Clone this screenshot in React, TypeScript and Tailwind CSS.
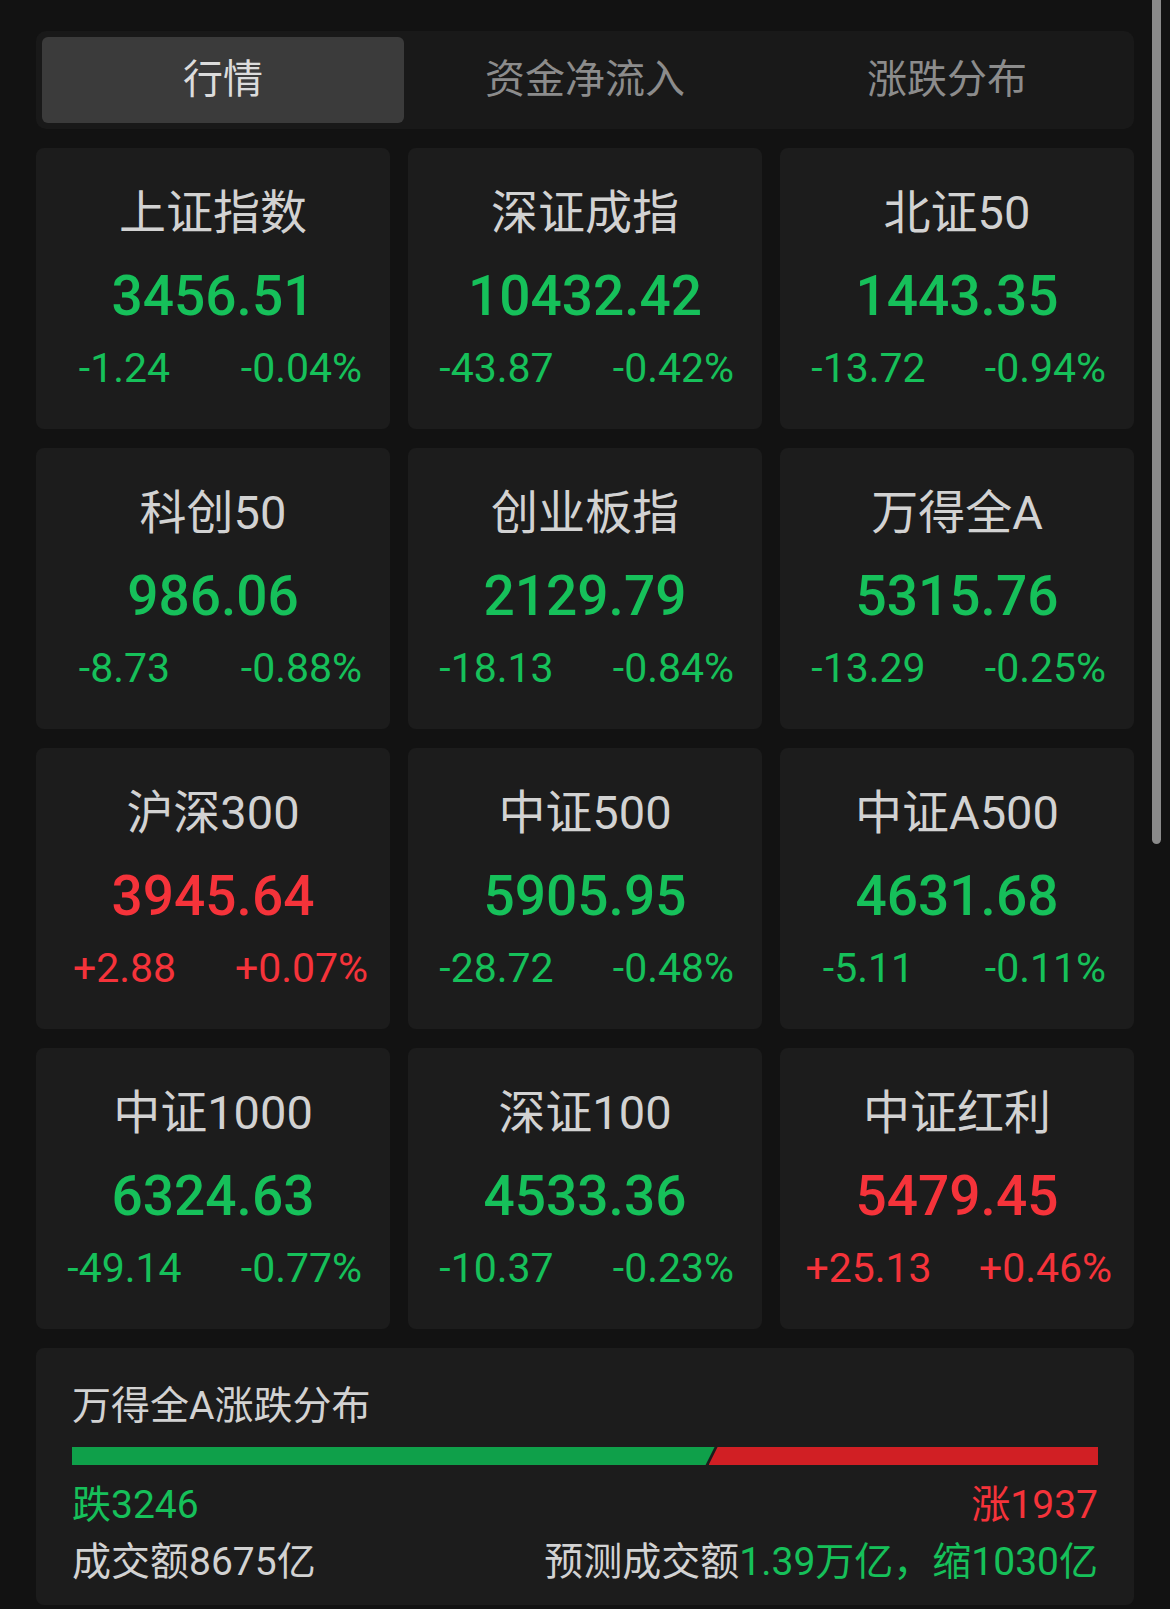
import { useState } from "react";

type Quote = {
  name: string;
  price: string;
  change: string;
  percent: string;
};

const QUOTES: Quote[] = [
  { name: "上证指数", price: "3456.51", change: "-1.24", percent: "-0.04%" },
  { name: "深证成指", price: "10432.42", change: "-43.87", percent: "-0.42%" },
  { name: "北证50", price: "1443.35", change: "-13.72", percent: "-0.94%" },
  { name: "科创50", price: "986.06", change: "-8.73", percent: "-0.88%" },
  { name: "创业板指", price: "2129.79", change: "-18.13", percent: "-0.84%" },
  { name: "万得全A", price: "5315.76", change: "-13.29", percent: "-0.25%" },
  { name: "沪深300", price: "3945.64", change: "+2.88", percent: "+0.07%" },
  { name: "中证500", price: "5905.95", change: "-28.72", percent: "-0.48%" },
  { name: "中证A500", price: "4631.68", change: "-5.11", percent: "-0.11%" },
  { name: "中证1000", price: "6324.63", change: "-49.14", percent: "-0.77%" },
  { name: "深证100", price: "4533.36", change: "-10.37", percent: "-0.23%" },
  { name: "中证红利", price: "5479.45", change: "+25.13", percent: "+0.46%" },
];

const TABS = ["行情", "资金净流入", "涨跌分布"];

const DOWN = 3246;
const UP = 1937;

function QuoteCard({ quote }: { quote: Quote }) {
  const up = quote.change.startsWith("+");
  const color = up ? "text-[#f5333a]" : "text-[#16c05a]";

  return (
    <div className="h-[281px] rounded-[8px] bg-[#1c1c1c] flex flex-col items-center pt-[37px]">
      <div className="text-[47px] leading-[56px] text-[#d2d2d2]">{quote.name}</div>
      <div className={`mt-[23px] text-[55px] leading-[64px] font-medium ${color}`}>
        {quote.price}
      </div>
      <div className={`mt-[16px] w-full grid grid-cols-2 text-center text-[41px] leading-[48px] ${color}`}>
        <span>{quote.change}</span>
        <span>{quote.percent}</span>
      </div>
    </div>
  );
}

export default function App() {
  const [activeTab, setActiveTab] = useState(0);
  const downPct = (DOWN / (DOWN + UP)) * 100;

  return (
    <div className="relative w-full min-h-[1609px] bg-[#121212] px-[36px] pt-[31px] font-['Roboto','Noto_Sans_CJK_SC',sans-serif]">
      {/* tabs */}
      <div className="h-[98px] rounded-[10px] bg-[#191919] p-[6px] grid grid-cols-3">
        {TABS.map((tab, i) => (
          <button
            key={tab}
            onClick={() => setActiveTab(i)}
            className={`rounded-[6px] text-[40px] leading-none ${
              activeTab === i ? "bg-[#3b3b3b] text-[#dcdcdc]" : "text-[#8c8c8c]"
            }`}
          >
            {tab}
          </button>
        ))}
      </div>

      {/* index cards */}
      <div className="mt-[19px] grid grid-cols-3 gap-x-[18px] gap-y-[19px]">
        {QUOTES.map((q) => (
          <QuoteCard key={q.name} quote={q} />
        ))}
      </div>

      {/* distribution */}
      <div className="mt-[19px] h-[257px] rounded-[8px] bg-[#1c1c1c] px-[36px] pt-[34px]">
        <div className="text-[39px] leading-[48px] text-[#d2d2d2]">万得全A涨跌分布</div>
        <div className="mt-[17px] h-[18px] flex">
          <div
            className="h-full bg-[#0fa04a] [clip-path:polygon(0_0,100%_0,calc(100%_-_9px)_100%,0_100%)]"
            style={{ width: `${downPct}%` }}
          />
          <div className="h-full flex-1 -ml-[6px] bg-[#d11f24] [clip-path:polygon(9px_0,100%_0,100%_100%,0_100%)]" />
        </div>
        <div className="mt-[18px] flex justify-between text-[39px] leading-[44px]">
          <span className="text-[#16c05a]">跌{DOWN}</span>
          <span className="text-[#f5333a]">涨{UP}</span>
        </div>
        <div className="mt-[13px] flex justify-between text-[39px] leading-[44px] text-[#d2d2d2]">
          <span>成交额8675亿</span>
          <span>
            预测成交额<span className="text-[#16c05a]">1.39万亿，缩1030亿</span>
          </span>
        </div>
      </div>

      {/* scrollbar */}
      <div className="absolute left-[1152px] top-0 w-[9px] h-[844px] rounded-b-full bg-[#8a8a8a]" />
    </div>
  );
}
